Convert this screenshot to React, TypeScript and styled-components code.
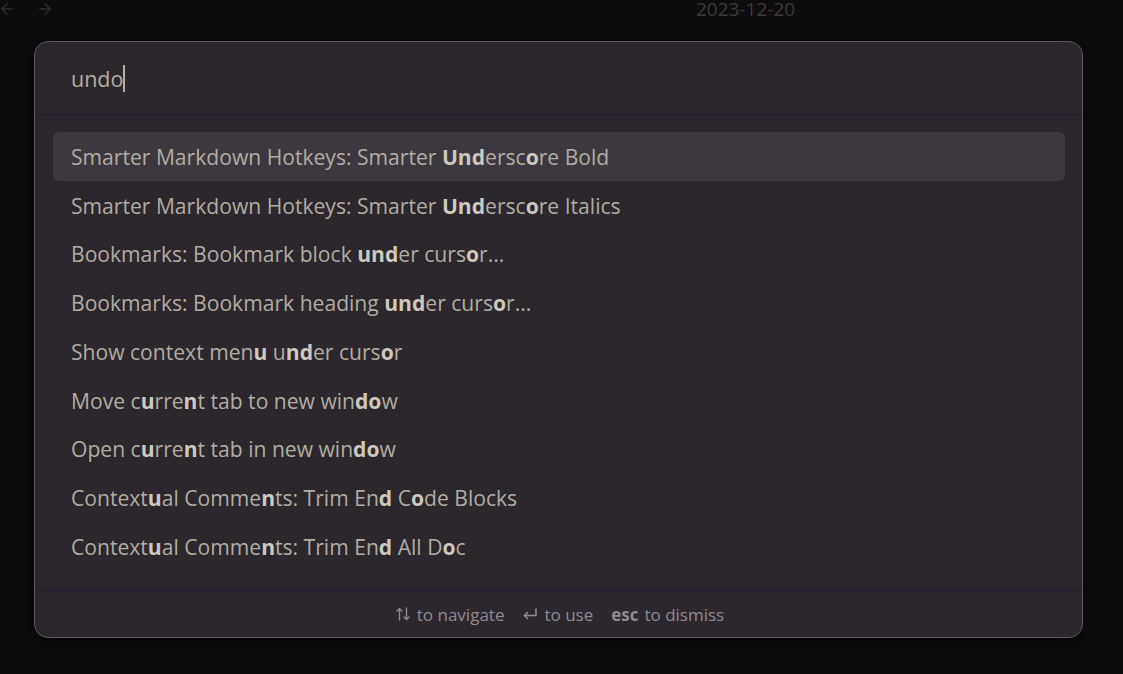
import React from "react";
import styled, { createGlobalStyle } from "styled-components";

const Global = createGlobalStyle`
  html, body { margin: 0; padding: 0; background: #0d0b0e; }
  body { font-family: "Open Sans", "Noto Sans", sans-serif; }
`;

const Page = styled.div`
  width: 1123px;
  height: 674px;
  background: #0d0b0e;
  display: flex;
  flex-direction: column;
  overflow: hidden;
`;

const TopBar = styled.div`
  height: 34px;
  display: flex;
  align-items: flex-start;
  position: relative;
`;

const NavButtons = styled.div`
  display: flex;
  gap: 20px;
  margin-left: -2px;
  color: #2e2c2e;
`;

const DateTitle = styled.div`
  position: absolute;
  left: 696px;
  top: 0;
  line-height: 18px;
  font-size: 19px;
  color: #3c3a39;
`;

const Modal = styled.div`
  margin: 7px 0 0 34px;
  width: 1049px;
  height: 597px;
  box-sizing: border-box;
  background: #2c262d;
  border: 1px solid #5c5a5d;
  border-radius: 14px;
  box-shadow: 0 4px 18px rgba(0, 0, 0, 0.6);
  display: flex;
  flex-direction: column;
  overflow: hidden;
`;

const InputArea = styled.div`
  height: 72px;
  flex: none;
  display: flex;
  align-items: center;
  padding-left: 36px;
  border-bottom: 1px solid #211b3c;
  font-size: 21.5px;
  color: #b3afa4;
`;

const Caret = styled.span`
  display: inline-block;
  width: 2px;
  height: 27px;
  background: #b3afa4;
  vertical-align: middle;
`;

const List = styled.div`
  flex: 1;
  padding: 17px 17px 0 18px;
  display: flex;
  flex-direction: column;
`;

const Row = styled.div<{ $selected?: boolean }>`
  height: 48.75px;
  flex: none;
  box-sizing: border-box;
  display: flex;
  align-items: center;
  padding-left: 18px;
  border-radius: 6px;
  background: ${(p) => (p.$selected ? "#3d373f" : "transparent")};
  font-size: 21.1px;
  color: #b1ada2;
  white-space: pre;
`;

const Match = styled.span`
  font-weight: 700;
  color: #cdc9be;
`;

const Footer = styled.div`
  height: 46px;
  flex: none;
  border-top: 1px solid #211b3c;
  display: flex;
  align-items: center;
  justify-content: center;
  gap: 18px;
  font-size: 17px;
  color: #8e8a92;
  padding-left: 2px;
`;

const Hint = styled.span`
  display: inline-flex;
  align-items: center;
  gap: 6px;
`;

const Key = styled.span`
  font-weight: 700;
`;

type Seg = [string, boolean];

const rows: Seg[][] = [
  [["Smarter Markdown Hotkeys: Smarter ", false], ["Und", true], ["ersc", false], ["o", true], ["re Bold", false]],
  [["Smarter Markdown Hotkeys: Smarter ", false], ["Und", true], ["ersc", false], ["o", true], ["re Italics", false]],
  [["Bookmarks: Bookmark block ", false], ["und", true], ["er curs", false], ["o", true], ["r...", false]],
  [["Bookmarks: Bookmark heading ", false], ["und", true], ["er curs", false], ["o", true], ["r...", false]],
  [["Show context men", false], ["u", true], [" u", false], ["nd", true], ["er curs", false], ["o", true], ["r", false]],
  [["Move c", false], ["u", true], ["rre", false], ["n", true], ["t tab to new win", false], ["do", true], ["w", false]],
  [["Open c", false], ["u", true], ["rre", false], ["n", true], ["t tab in new win", false], ["do", true], ["w", false]],
  [["Context", false], ["u", true], ["al Comme", false], ["n", true], ["ts: Trim En", false], ["d", true], [" C", false], ["o", true], ["de Blocks", false]],
  [["Context", false], ["u", true], ["al Comme", false], ["n", true], ["ts: Trim En", false], ["d", true], [" All D", false], ["o", true], ["c", false]],
];

const Arrow = ({ dir }: { dir: "left" | "right" }) => (
  <svg width="18" height="18" viewBox="0 0 24 24" fill="none" stroke="currentColor" strokeWidth="2" strokeLinecap="round" strokeLinejoin="round">
    {dir === "left" ? (
      <>
        <path d="M19 12H5" />
        <path d="M12 19l-7-7 7-7" />
      </>
    ) : (
      <>
        <path d="M5 12h14" />
        <path d="M12 5l7 7-7 7" />
      </>
    )}
  </svg>
);

const UpDown = () => (
  <svg width="16" height="16" viewBox="0 0 16 16" fill="none" stroke="currentColor" strokeWidth="1.4" strokeLinecap="round" strokeLinejoin="round">
    <path d="M4.5 14V2.5M2 5l2.5-2.5L7 5" />
    <path d="M11.5 2v11.5M9 11l2.5 2.5L14 11" />
  </svg>
);

const Enter = () => (
  <svg width="16" height="16" viewBox="0 0 16 16" fill="none" stroke="currentColor" strokeWidth="1.6" strokeLinecap="round" strokeLinejoin="round">
    <path d="M14 3v6.5H2.5" />
    <path d="M5.5 6.5l-3 3 3 3" />
  </svg>
);

export default function App() {
  return (
    <>
      <Global />
      <Page>
        <TopBar>
          <NavButtons>
            <Arrow dir="left" />
            <Arrow dir="right" />
          </NavButtons>
          <DateTitle>2023-12-20</DateTitle>
        </TopBar>
        <Modal>
          <InputArea>
            <span>undo</span>
            <Caret />
          </InputArea>
          <List>
            {rows.map((segs, i) => (
              <Row key={i} $selected={i === 0}>
                {segs.map(([t, m], j) => (m ? <Match key={j}>{t}</Match> : <span key={j}>{t}</span>))}
              </Row>
            ))}
          </List>
          <Footer>
            <Hint>
              <UpDown /> to navigate
            </Hint>
            <Hint>
              <Enter /> to use
            </Hint>
            <Hint>
              <Key>esc</Key> to dismiss
            </Hint>
          </Footer>
        </Modal>
      </Page>
    </>
  );
}
